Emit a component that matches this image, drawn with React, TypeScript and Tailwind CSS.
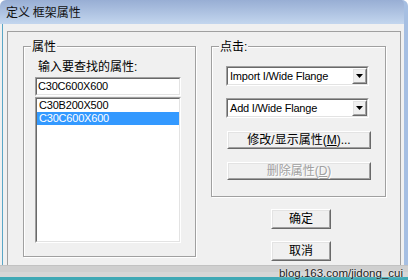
import React from "react";

function Sunken({ className = "", children }: { className?: string; children?: React.ReactNode }) {
  return (
    <div className={`border border-t-[#a0a0a0] border-l-[#a0a0a0] border-r-white border-b-white ${className}`}>
      <div className="w-full h-full border border-t-[#696969] border-l-[#696969] border-r-[#e3e3e3] border-b-[#e3e3e3] bg-white">
        {children}
      </div>
    </div>
  );
}

function Raised({ className = "", children }: { className?: string; children?: React.ReactNode }) {
  return (
    <div className={`border border-t-white border-l-white border-r-[#696969] border-b-[#696969] bg-[#f0f0f0] ${className}`}>
      <div className="w-full h-full border border-t-[#e3e3e3] border-l-[#e3e3e3] border-r-[#a0a0a0] border-b-[#a0a0a0] flex items-center justify-center">
        {children}
      </div>
    </div>
  );
}

function Combo({ label }: { label: string }) {
  return (
    <Sunken className="w-[143px] h-[20px]">
      <div className="flex h-full">
        <div className="flex-1 pl-[2px] text-[11px] leading-[16px] tracking-[-0.2px] text-black">{label}</div>
        <Raised className="w-[15px] h-full">
          <svg width="7" height="4" viewBox="0 0 7 4">
            <path d="M0 0h7L3.5 4z" fill="#000" />
          </svg>
        </Raised>
      </div>
    </Sunken>
  );
}

function Group({ title, className = "", children }: { title: string; className?: string; children?: React.ReactNode }) {
  return (
    <div className={`relative border border-[#a0a0a0] shadow-[inset_1px_1px_0_#fff,1px_1px_0_#fff] ${className}`}>
      <span className="absolute -top-[8px] left-[7px] px-[1px] bg-[#f0f0f0] text-[12px] leading-[16px] text-black">
        {title}
      </span>
      {children}
    </div>
  );
}

export default function App() {
  return (
    <div className="relative w-[408px] h-[280px] overflow-hidden bg-white flex flex-col font-['Liberation_Sans','Noto_Sans_CJK_SC',sans-serif] text-black">
      {/* Title bar */}
      <div className="h-[24px] flex items-center pl-[6px] rounded-t-[6px] bg-gradient-to-b from-[#98aed4] to-[#c3d6ee] border-r-[4px] border-r-[#a6bfe2]">
        <span className="text-[12px] leading-[16px] font-['Noto_Sans_CJK_SC',sans-serif] text-[#111]">定义&nbsp;框架属性</span>
      </div>

      {/* Body */}
      <div className="flex-1 flex flex-col bg-[#f0f0f0] pl-[7px] pr-[3px] pt-[7px] border-r-[4px] border-r-[#a6bfe2] shadow-[inset_2px_0_0_#f0f0f0,inset_3px_0_0_#5aa6c6]">
        <div className="flex-1 flex border-l border-t border-r border-[#a0a0a0] pl-[15px] pt-[14px] gap-[15px]">
          {/* Left group */}
          <Group title="属性" className="w-[173px] h-[211px]">
            <div className="flex flex-col">
              <div className="mt-[12px] ml-[14px] text-[12px] leading-[16px]">输入要查找的属性:</div>
              <Sunken className="mt-[2px] ml-[11px] w-[146px] h-[19px]">
                <div className="pl-[1px] text-[11px] leading-[15px] tracking-[-0.2px]">C30C600X600</div>
              </Sunken>
              <Sunken className="mt-[1px] ml-[11px] w-[146px] h-[146px]">
                <div className="flex flex-col text-[11px] leading-[13px] tracking-[-0.2px]">
                  <div className="pl-[2px]">C30B200X500</div>
                  <div className="pl-[2px] bg-[#3399ff] text-white">C30C600X600</div>
                </div>
              </Sunken>
            </div>
          </Group>

          {/* Right column */}
          <div className="flex flex-col">
            <Group title="点击:" className="w-[175px] h-[151px]">
              <div className="flex flex-col pl-[14px]">
                <div className="mt-[19px]">
                  <Combo label="Import I/Wide Flange" />
                </div>
                <div className="mt-[12px]">
                  <Combo label="Add I/Wide Flange" />
                </div>
                <Raised className="mt-[13px] ml-[1px] w-[144px] h-[18px]">
                  <span className="text-[12px] leading-[14px]">
                    修改/显示属性(<span className="underline">M</span>)...
                  </span>
                </Raised>
                <Raised className="mt-[13px] ml-[1px] w-[144px] h-[18px]">
                  <span className="text-[12px] leading-[14px] text-[#a0a0a0] [text-shadow:1px_1px_0_#fff]">
                    删除属性(<span className="underline">D</span>)
                  </span>
                </Raised>
              </div>
            </Group>
            <Raised className="mt-[12px] ml-[60px] w-[60px] h-[20px]">
              <span className="text-[12px] leading-[14px]">确定</span>
            </Raised>
            <Raised className="mt-[12px] ml-[60px] w-[60px] h-[20px]">
              <span className="text-[12px] leading-[14px]">取消</span>
            </Raised>
          </div>
        </div>
      </div>

      {/* Bottom band */}
      <div className="h-[12px] bg-[#cfcfcf] border-t border-[#c2c2c2] shadow-[inset_0_-5px_0_#d6d6d6]" />
      <div className="h-[3px] bg-[#3fa9b5]" />

      <span className="absolute right-[5px] bottom-[0px] text-[11.5px] leading-[14px] text-[#222] [text-shadow:0_0_2px_#fff]">
        blog.163.com/jidong_cui
      </span>
    </div>
  );
}
